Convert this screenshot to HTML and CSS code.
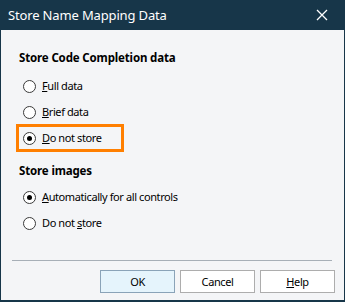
FILE: index.html
```html
<!DOCTYPE html>
<html>
<head>
<meta charset="utf-8">
<link rel="stylesheet" href="styles.css">
</head>
<body>
<div class="window">
  <div class="titlebar">
    <span class="title">Store Name Mapping Data</span>
    <svg class="close" width="12" height="12" viewBox="0 0 12 12"><path d="M1 1 L11 11 M11 1 L1 11" stroke="#ffffff" stroke-width="1.3" fill="none"/></svg>
  </div>
  <div class="content">
    <div class="heading h1">Store Code Completion data</div>
    <div class="radios r1">
      <div class="row"><span class="radio"></span><span class="label"><u>F</u>ull data</span></div>
      <div class="row"><span class="radio"></span><span class="label"><u>B</u>rief data</span></div>
      <div class="row highlight"><span class="radio checked"></span><span class="label"><u>D</u>o not store</span></div>
    </div>
    <div class="heading h2">Store images</div>
    <div class="radios r2">
      <div class="row"><span class="radio checked"></span><span class="label"><u>A</u>utomatically for all controls</span></div>
      <div class="row"><span class="radio"></span><span class="label">Do not <u>s</u>tore</span></div>
    </div>
    <div class="separator"></div>
    <div class="buttons">
      <div class="btn default">OK</div>
      <div class="btn">Cancel</div>
      <div class="btn"><u>H</u>elp</div>
    </div>
  </div>
</div>
</body>
</html>
```
FILE: styles.css
```css
* { box-sizing: border-box; }
html, body { margin: 0; padding: 0; }
body {
  font-family: "Noto Sans", "Open Sans", sans-serif;
  font-size: 11px;
  letter-spacing: -0.4px;
  color: #000;
  background: #f4f5f7;
}
.window {
  width: 345px;
  height: 302px;
  background: #173649;
  display: flex;
  flex-direction: column;
  padding: 0 1px 2px 1px;
}
.titlebar {
  height: 30px;
  flex: none;
  display: flex;
  align-items: center;
  justify-content: space-between;
  padding: 0 16px 0 7px;
  color: #fff;
}
.title {
  font-size: 13px;
  letter-spacing: -0.15px;
  line-height: 18px;
}
.close { display: block; }
.content {
  flex: 1;
  background: #f4f5f7;
  display: flex;
  flex-direction: column;
  padding: 20px 0 0 0;
}
.heading {
  font-weight: bold;
  font-size: 11.5px;
  letter-spacing: -0.15px;
  line-height: 16px;
  padding-left: 18px;
}
.radios { display: flex; flex-direction: column; }
.r1 { margin-top: 7px; }
.h2 { margin-top: 12px; }
.r2 { margin-top: 5px; }
.row {
  height: 26px;
  display: flex;
  align-items: center;
  padding-left: 22px;
  position: relative;
  align-self: flex-start;
  padding-right: 8px;
}
.highlight::after {
  content: "";
  position: absolute;
  left: -1px; top: -1px; right: -1px; bottom: -1px;
  border: 3px solid #ff7f00;
}
.highlight { width: 106px; left: 16px; padding-left: 6px; }
.radio {
  width: 13px; height: 13px;
  border: 1px solid #3a3a3a;
  border-radius: 50%;
  background: #fff;
  flex: none;
  display: flex;
  align-items: center;
  justify-content: center;
}
.radio.checked::before {
  content: "";
  width: 5px; height: 5px;
  border-radius: 50%;
  background: #000;
}
.label { margin-left: 6px; line-height: 16px; }
.separator {
  margin: 24px 12px 0 11px;
  height: 1px;
  background: #a7afb7;
}
.buttons {
  display: flex;
  justify-content: flex-end;
  gap: 5px;
  margin-top: 9px;
  padding-right: 9px;
}
.btn {
  width: 75px;
  height: 23px;
  border: 1px solid #adadad;
  background: #fff;
  display: flex;
  align-items: center;
  justify-content: center;
  line-height: 16px;
}
.btn.default {
  background: #e5f4fc;
  border-color: #8aa3b8;
}
```
